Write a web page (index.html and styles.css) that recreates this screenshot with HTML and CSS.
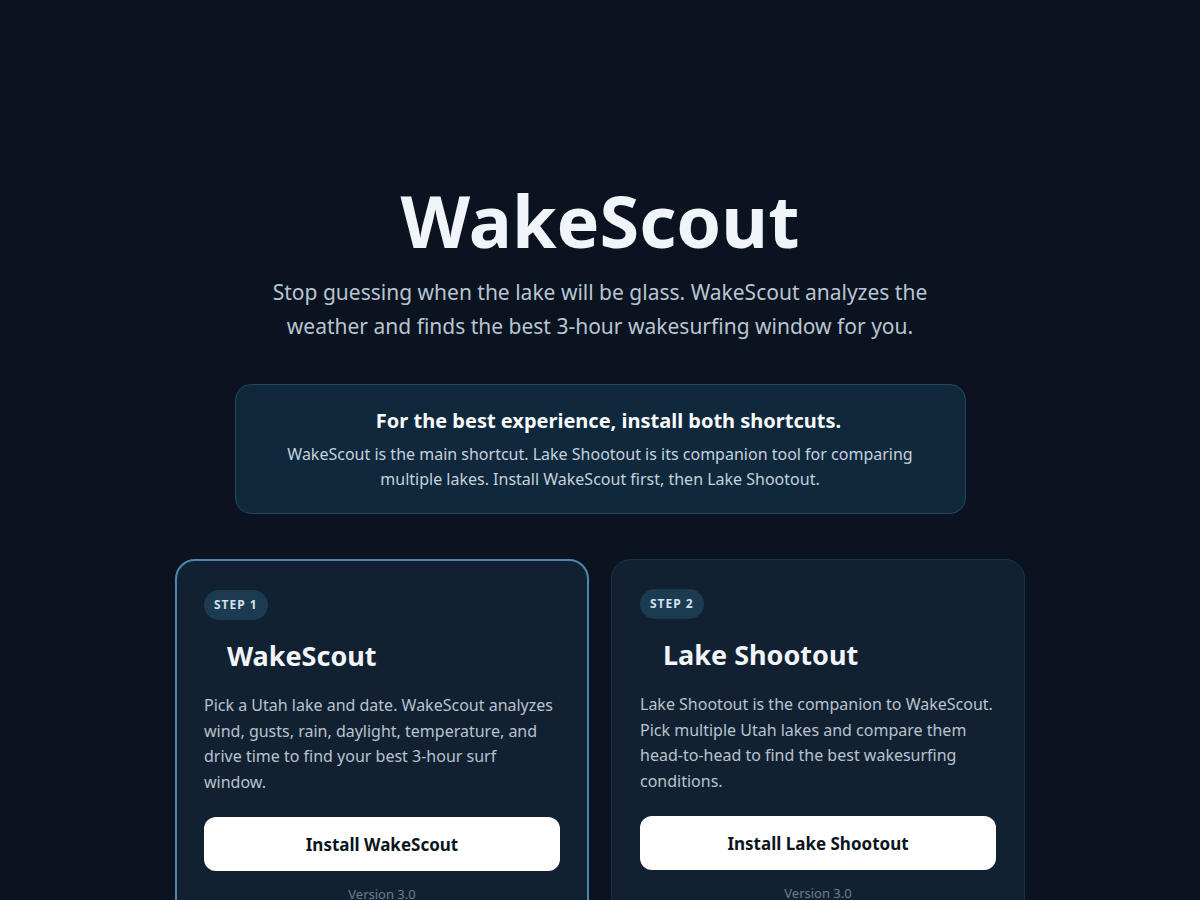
FILE: index.html
```html
<!DOCTYPE html>
<html lang="en">
<head>
<meta charset="utf-8">
<title>WakeScout</title>
<link rel="stylesheet" href="styles.css">
</head>
<body>
<main class="page">
  <header class="hero">
    <h1 class="title">WakeScout</h1>
    <p class="subtitle">Stop guessing when the lake will be glass. WakeScout analyzes the weather and finds the best 3-hour wakesurfing window for you.</p>
  </header>

  <section class="notice">
    <h3 class="notice-title"><span class="notice-icon"></span>For the best experience, install both shortcuts.</h3>
    <p class="notice-text">WakeScout is the main shortcut. Lake Shootout is its companion tool for comparing multiple lakes. Install WakeScout first, then Lake Shootout.</p>
  </section>

  <section class="cards">
    <article class="card card-primary">
      <span class="badge">STEP 1</span>
      <h2 class="card-title"><span class="card-icon"></span>WakeScout</h2>
      <p class="card-text">Pick a Utah lake and date. WakeScout analyzes wind, gusts, rain, daylight, temperature, and drive time to find your best 3-hour surf window.</p>
      <a class="install-btn" href="#">Install WakeScout</a>
      <p class="version">Version 3.0</p>
    </article>
    <article class="card">
      <span class="badge">STEP 2</span>
      <h2 class="card-title"><span class="card-icon"></span>Lake Shootout</h2>
      <p class="card-text">Lake Shootout is the companion to WakeScout. Pick multiple Utah lakes and compare them head-to-head to find the best wakesurfing conditions.</p>
      <a class="install-btn" href="#">Install Lake Shootout</a>
      <p class="version">Version 3.0</p>
    </article>
  </section>
</main>
</body>
</html>
```

FILE: styles.css
```css
* { box-sizing: border-box; }

html, body {
  margin: 0;
  padding: 0;
  background: #0a131f;
}

body {
  font-family: "Noto Sans", "Open Sans", "DejaVu Sans", sans-serif;
  color: #e6edf4;
}

.page {
  max-width: 850px;
  margin: 0 auto;
  padding: 175px 0 60px;
}

.hero {
  text-align: center;
}

.title {
  margin: 0;
  font-size: 72px;
  font-weight: 700;
  line-height: 90px;
  color: #f1f5f9;
}

.subtitle {
  max-width: 700px;
  margin: 10px auto 0;
  font-size: 21px;
  line-height: 34px;
  color: #b9c5d3;
}

.notice {
  width: 731px;
  margin: 41px auto 0;
  padding: 22px 40px 21px;
  background: #10283c;
  border: 1px solid #23465f;
  border-radius: 16px;
  text-align: center;
}

.notice-title {
  margin: 0;
  font-size: 20px;
  line-height: 28px;
  font-weight: 700;
  color: #f8fafc;
}

.notice-icon {
  display: inline-block;
  width: 17px;
}

.notice-text {
  margin: 7px 0 0;
  font-size: 16px;
  line-height: 25px;
  color: #c5d1dd;
}

.cards {
  display: grid;
  grid-template-columns: 1fr 1fr;
  gap: 22px;
  margin-top: 45px;
}

.card {
  background: #122132;
  border: 1px solid #1f3244;
  border-radius: 20px;
  padding: 29px 28px 20px;
  display: flex;
  flex-direction: column;
  align-items: flex-start;
}

.card-primary {
  border: 2px solid #4f87aa;
  padding: 29px 27px 19px;
}

.badge {
  display: inline-block;
  padding: 0 10px;
  height: 30px;
  line-height: 30px;
  border-radius: 15px;
  background: #1c3a50;
  color: #d2e2ee;
  font-size: 12px;
  font-weight: 700;
  letter-spacing: 1px;
}

.card-title {
  margin: 19px 0 0;
  font-size: 27px;
  line-height: 34px;
  font-weight: 700;
  color: #f1f5f9;
}

.card-icon {
  display: inline-block;
  width: 23px;
}

.card-text {
  margin: 20px 0 0;
  font-size: 16px;
  line-height: 25.5px;
  color: #b7c3cf;
}

.install-btn {
  display: flex;
  align-items: center;
  justify-content: center;
  align-self: stretch;
  height: 54px;
  margin-top: 22px;
  background: #ffffff;
  border-radius: 12px;
  color: #0b1520;
  font-size: 17px;
  font-weight: 700;
  text-decoration: none;
}

.version {
  align-self: stretch;
  margin: 13px 0 0;
  text-align: center;
  font-size: 13px;
  line-height: 20px;
  color: #6c7d8e;
}
```
